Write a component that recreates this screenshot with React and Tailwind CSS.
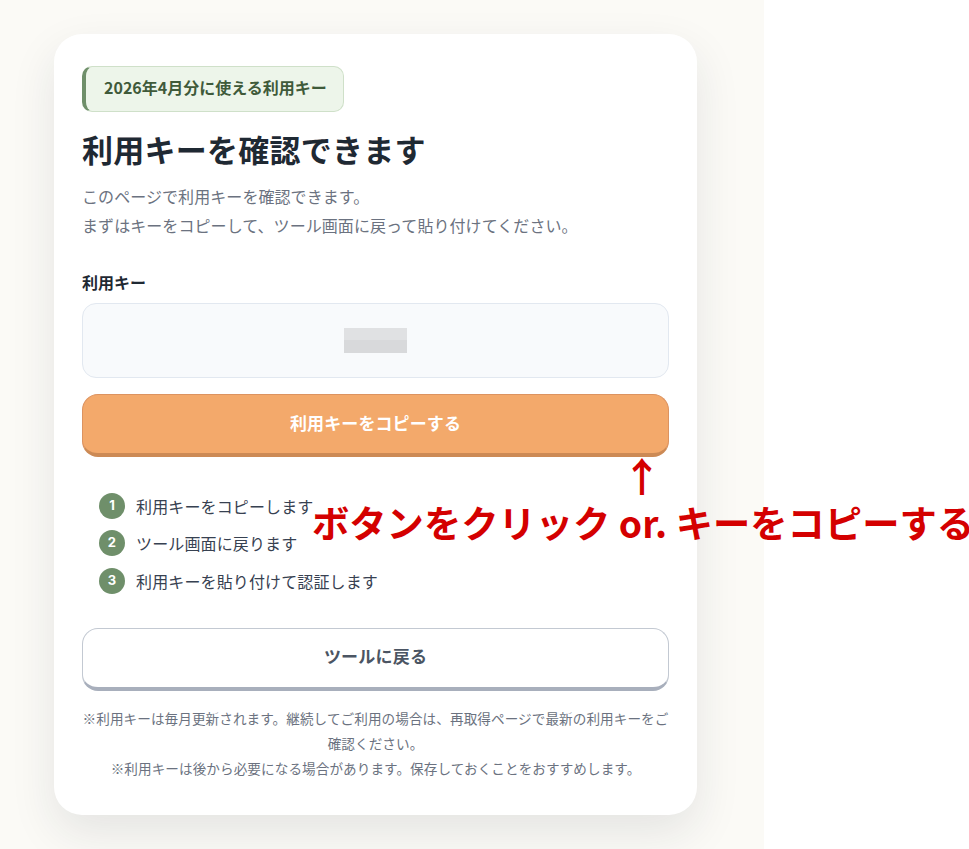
import React from 'react';

const steps = [
  '利用キーをコピーします',
  'ツール画面に戻ります',
  '利用キーを貼り付けて認証します',
];

const App = () => {
  return (
    <div className="relative min-h-[849px] w-[969px] overflow-hidden bg-white font-['Noto_Sans_CJK_JP','Noto_Sans',sans-serif]">
      <div className="h-[849px] w-[764px] bg-[#fbfaf6] pl-[54px] pt-[34px]">
        <div className="h-[781px] w-[643px] rounded-[28px] bg-white px-[28px] pt-[32px] shadow-[0_18px_45px_rgba(31,41,55,0.10)]">
          <div className="flex h-[46px] w-[262px] items-center rounded-[10px] border border-l-4 border-[#cfe0c9] border-l-[#6f8f6a] bg-[#edf5ea] pb-[4px] pl-[18px] text-[16px] font-bold text-[#3f5a3a]">
            2026年4月分に使える利用キー
          </div>

          <h1 className="mt-[14px] text-[31px] font-bold leading-[46px] tracking-[0.25px] text-[#1f2933]">利用キーを確認できます</h1>

          <div className="mt-[10px] text-[16px] leading-[29px] tracking-[0.07px] text-[#6b7280]">
            <p>このページで利用キーを確認できます。</p>
            <p>まずはキーをコピーして、ツール画面に戻って貼り付けてください。</p>
          </div>

          <div className="mt-[31px] text-[16px] font-bold leading-[22px] text-[#1f2933]">利用キー</div>

          <div className="mt-[10px] flex h-[75px] items-center justify-center rounded-[14px] border border-[#e2e8f0] bg-[#f8fafc]">
            <div className="flex h-[25px] w-[63px] flex-col">
              <div className="h-[12px] bg-[#e0e1e3]"></div>
              <div className="h-[13px] bg-[#d8d9db]"></div>
            </div>
          </div>

          <button className="mt-[16px] block h-[63px] w-full rounded-[16px] border border-b-4 border-[#dc9360] border-b-[#cc8a55] bg-[#f3a96b] pb-[3px] text-[17px] font-bold tracking-[0.1px] text-white">
            利用キーをコピーする
          </button>

          <ul className="mt-[35.6px] flex flex-col gap-[11.5px] pl-[17px]">
            {steps.map((step, i) => (
              <li key={step} className="flex h-[26px] items-center gap-[11px] text-[16px] tracking-[0.13px] text-[#374151]">
                <span className="flex h-[26px] w-[26px] items-center justify-center rounded-full bg-[#6f8f6a] font-['Inter',sans-serif] text-[13px] font-bold text-white">
                  {i + 1}
                </span>
                {step}
              </li>
            ))}
          </ul>

          <button className="mt-[34.4px] block h-[63px] w-full rounded-[16px] border border-b-4 border-[#c3c9d2] border-b-[#a8afbc] bg-white pb-[4px] text-[17px] font-bold tracking-[0.2px] text-[#4b5563]">
            ツールに戻る
          </button>

          <div className="mt-[15px] text-center text-[13.6px] leading-[25px] tracking-[0.08px] text-[#6b7280]">
            <p>※利用キーは毎月更新されます。継続してご利用の場合は、再取得ページで最新の利用キーをご確認ください。</p>
            <p>※利用キーは後から必要になる場合があります。保存しておくことをおすすめします。</p>
          </div>
        </div>
      </div>

      <div className="absolute left-[622px] top-[450px] text-[40px] font-bold leading-[50px] text-[#d40000]">↑</div>
      <div className="absolute left-[312px] top-[496px] whitespace-nowrap text-[37.3px] font-bold leading-[52px] text-[#d40000]">
        ボタンをクリック or. キーをコピーする
      </div>
    </div>
  );
};

export default App;
